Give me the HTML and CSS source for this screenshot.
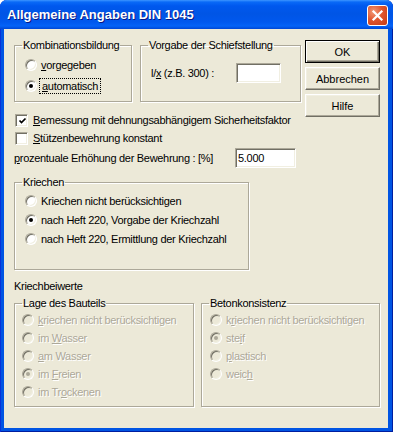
FILE: index.html
```html
<!DOCTYPE html>
<html lang="de">
<head>
    <meta charset="UTF-8">
    <meta name="viewport" content="width=device-width, initial-scale=1.0">
    <title>Allgemeine Angaben DIN 1045</title>
    <link rel="stylesheet" href="styles.css">
</head>
<body>
    <div class="window">
        <div class="titlebar">
            <span class="title">Allgemeine Angaben DIN 1045</span>
            <span class="close">
                <svg width="19" height="19" viewBox="0 0 19 19"><path d="M5.5 5.5l8 8M13.5 5.5l-8 8" stroke="#fff" stroke-width="2.2" stroke-linecap="square"/></svg>
            </span>
        </div>
        <div class="client">
            <div class="top-row">
                <fieldset class="group group-komb">
                    <legend>Kombinationsbildung</legend>
                    <div class="group-body">
                        <div class="opt"><span class="radio"></span><span><u>v</u>orgegeben</span></div>
                        <div class="opt"><span class="radio checked"></span><span class="focus"><u>a</u>utomatisch</span></div>
                    </div>
                </fieldset>
                <fieldset class="group group-schief">
                    <legend>Vorgabe der Schiefstellung</legend>
                    <div class="group-body field-row">
                        <span>l/<u>x</u> (z.B. 300) :</span>
                        <span class="edit edit-schief"></span>
                    </div>
                </fieldset>
                <div class="buttons">
                    <button class="btn btn-default">OK</button>
                    <button class="btn">Abbrechen</button>
                    <button class="btn">Hilfe</button>
                </div>
            </div>

            <div class="checks">
                <div class="check-row">
                    <span class="checkbox"><svg width="9" height="9" viewBox="0 0 9 9"><path d="M1.5 3.5l2 2 4-4" fill="none" stroke="#000" stroke-width="1.7"/></svg></span>
                    <span><u>B</u>emessung mit dehnungsabhängigem Sicherheitsfaktor</span>
                </div>
                <div class="check-row">
                    <span class="checkbox"></span>
                    <span><u>S</u>tützenbewehrung konstant</span>
                </div>
                <div class="percent-row">
                    <span class="percent-label"><u>p</u>rozentuale Erhöhung der Bewehrung : [%]</span>
                    <span class="edit edit-percent">5.000</span>
                </div>
            </div>

            <fieldset class="group group-kriechen">
                <legend>Kriechen</legend>
                <div class="group-body">
                    <div class="opt"><span class="radio"></span><span>Kriechen nicht berücksichtigen</span></div>
                    <div class="opt"><span class="radio checked"></span><span>nach Heft 220, Vorgabe der Kriechzahl</span></div>
                    <div class="opt"><span class="radio"></span><span>nach Heft 220, Ermittlung der Kriechzahl</span></div>
                </div>
            </fieldset>

            <div class="section-label">Kriechbeiwerte</div>

            <div class="bottom-row">
                <fieldset class="group group-lage">
                    <legend>Lage des Bauteils</legend>
                    <div class="group-body">
                        <div class="opt disabled"><span class="radio"></span><span><u>k</u>riechen nicht berücksichtigen</span></div>
                        <div class="opt disabled"><span class="radio"></span><span>im <u>W</u>asser</span></div>
                        <div class="opt disabled"><span class="radio"></span><span><u>a</u>m Wasser</span></div>
                        <div class="opt disabled"><span class="radio checked"></span><span>im <u>F</u>reien</span></div>
                        <div class="opt disabled"><span class="radio"></span><span>im Tr<u>o</u>ckenen</span></div>
                    </div>
                </fieldset>
                <fieldset class="group group-beton">
                    <legend>Betonkonsistenz</legend>
                    <div class="group-body">
                        <div class="opt disabled"><span class="radio"></span><span>k<u>r</u>iechen nicht berücksichtigen</span></div>
                        <div class="opt disabled"><span class="radio checked"></span><span>ste<u>i</u>f</span></div>
                        <div class="opt disabled"><span class="radio"></span><span><u>p</u>lastisch</span></div>
                        <div class="opt disabled"><span class="radio"></span><span>weic<u>h</u></span></div>
                    </div>
                </fieldset>
            </div>
        </div>
    </div>
</body>
</html>
```

FILE: styles.css
```css
html, body {
    margin: 0;
    padding: 0;
    background: #fff;
}
body {
    font-family: "Liberation Sans", Arial, sans-serif;
    font-size: 11px;
    color: #000;
}
.window {
    width: 393px;
    height: 432px;
    display: flex;
    flex-direction: column;
    background: #0054e3;
    border-radius: 7px 7px 0 0;
    box-shadow: inset 1px 0 0 #0831d9, inset -1px 0 0 #001ea0, inset 0 -1px 0 #001ea0;
    overflow: hidden;
}
.titlebar {
    height: 29px;
    flex: none;
    display: flex;
    padding: 0 5px 0 7px;
    background: linear-gradient(to bottom, #3d95ff 0, #0a6af7 2px, #0058ee 6px, #0055e5 14px, #0058ee 22px, #0463f7 26px, #0050e0 28px, #0046d5 29px);
}
.title {
    flex: 1;
    align-self: center;
    color: #fff;
    font-weight: bold;
    font-size: 13px;
    text-shadow: 1px 1px 0 #0a1883;
}
.close {
    width: 19px;
    height: 19px;
    margin-top: 5px;
    border: 1px solid #fff;
    border-radius: 3px;
    background: radial-gradient(circle at 30% 30%, #f29a78 0, #e0562f 45%, #c63a12 100%);
}
.close svg {
    display: block;
}
.client {
    flex: 1;
    margin: 0 5px 4px 4px;
    background: #ece9d8;
    padding: 10px 0 0 10px;
    display: flex;
    flex-direction: column;
    align-items: flex-start;
    letter-spacing: -0.3px;
}

/* group boxes */
.group {
    box-sizing: border-box;
    margin: 0;
    padding: 0;
    min-width: 0;
    border: 1px solid #aca899;
    box-shadow: inset 1px 1px 0 #fff, 1px 1px 0 #fff;
}
.group legend {
    margin-left: 7px;
    padding: 0 1px;
    line-height: 13px;
    white-space: nowrap;
}
.top-row {
    display: flex;
    align-items: flex-start;
    height: 63px;
}
.group-komb {
    width: 118px;
    height: 63px;
    margin-right: 8px;
}
.group-komb .group-body {
    padding: 2px 0 0 10px;
}
.group-komb .opt {
    height: 21px;
}
.group-schief {
    width: 161px;
    height: 63px;
}
.field-row {
    display: flex;
    align-items: center;
    justify-content: space-between;
    height: 20px;
    margin-top: 11px;
    padding: 0 19px 0 10px;
}
.buttons {
    display: flex;
    flex-direction: column;
    gap: 4px;
    margin: 1px 0 0 4px;
}

/* classic controls */
.btn {
    width: 75px;
    height: 23px;
    padding: 0;
    font: inherit;
    color: #000;
    background: #ece9d8;
    border: 1px solid;
    border-color: #fff #716f64 #716f64 #fff;
    box-shadow: inset -1px -1px 0 #aca899, inset 1px 1px 0 #f1efe2;
}
.btn-default {
    border-color: #000;
    box-shadow: inset 1px 1px 0 #fff, inset -1px -1px 0 #716f64, inset -2px -2px 0 #aca899;
}
.edit {
    box-sizing: border-box;
    display: block;
    height: 20px;
    padding: 3px 2px 0;
    background: #fff;
    border: 1px solid;
    border-color: #aca899 #fff #fff #aca899;
    box-shadow: inset 1px 1px 0 #716f64, inset -1px -1px 0 #f1efe2;
}
.edit-schief {
    width: 45px;
}
.edit-percent {
    width: 61px;
}
.opt {
    display: flex;
    align-items: center;
    gap: 4px;
}
.radio {
    box-sizing: border-box;
    width: 12px;
    height: 12px;
    flex: none;
    display: flex;
    align-items: center;
    justify-content: center;
    border-radius: 50%;
    background: #fff;
    border: 1px solid;
    border-color: #aca899 #fff #fff #aca899;
    box-shadow: inset 1px 1px 0 #716f64, inset -1px -1px 0 #f1efe2;
}
.radio.checked::after {
    content: "";
    width: 4px;
    height: 4px;
    border-radius: 50%;
    background: #000;
}
.focus {
    outline: 1px dotted #000;
    outline-offset: 1px;
    padding: 0 1px;
    line-height: 12px;
}
.checkbox {
    box-sizing: border-box;
    width: 13px;
    height: 13px;
    flex: none;
    padding: 2px;
    background: #fff;
    border: 1px solid;
    border-color: #aca899 #fff #fff #aca899;
    box-shadow: inset 1px 1px 0 #716f64, inset -1px -1px 0 #f1efe2;
}
.checkbox svg {
    display: block;
}
.disabled {
    color: #aca899;
    text-shadow: 1px 1px 0 #fff;
}
.disabled .radio {
    background: #ece9d8;
}
.disabled .radio.checked::after {
    background: #aca899;
}

/* middle part */
.checks {
    margin-top: 9px;
}
.check-row {
    display: flex;
    align-items: center;
    gap: 5px;
    height: 18px;
    padding-left: 1px;
}
.percent-row {
    display: flex;
    align-items: center;
    height: 20px;
    margin-top: 1px;
}
.percent-label {
    width: 221px;
}
.group-kriechen {
    width: 235px;
    height: 94px;
    margin-top: 8px;
}
.group-kriechen .group-body {
    padding: 2px 0 0 10px;
}
.group-kriechen .opt {
    height: 19px;
}
.section-label {
    margin-top: 10px;
    line-height: 13px;
}
.bottom-row {
    display: flex;
    gap: 7px;
    margin-top: 4px;
}
.group-lage,
.group-beton {
    height: 110px;
}
.group-lage {
    width: 180px;
}
.group-beton {
    width: 179px;
}
.group-lage .group-body {
    padding: 1px 0 0 7px;
}
.group-beton .group-body {
    padding: 1px 0 0 8px;
}
.group-lage .opt,
.group-beton .opt {
    height: 18px;
}
```
